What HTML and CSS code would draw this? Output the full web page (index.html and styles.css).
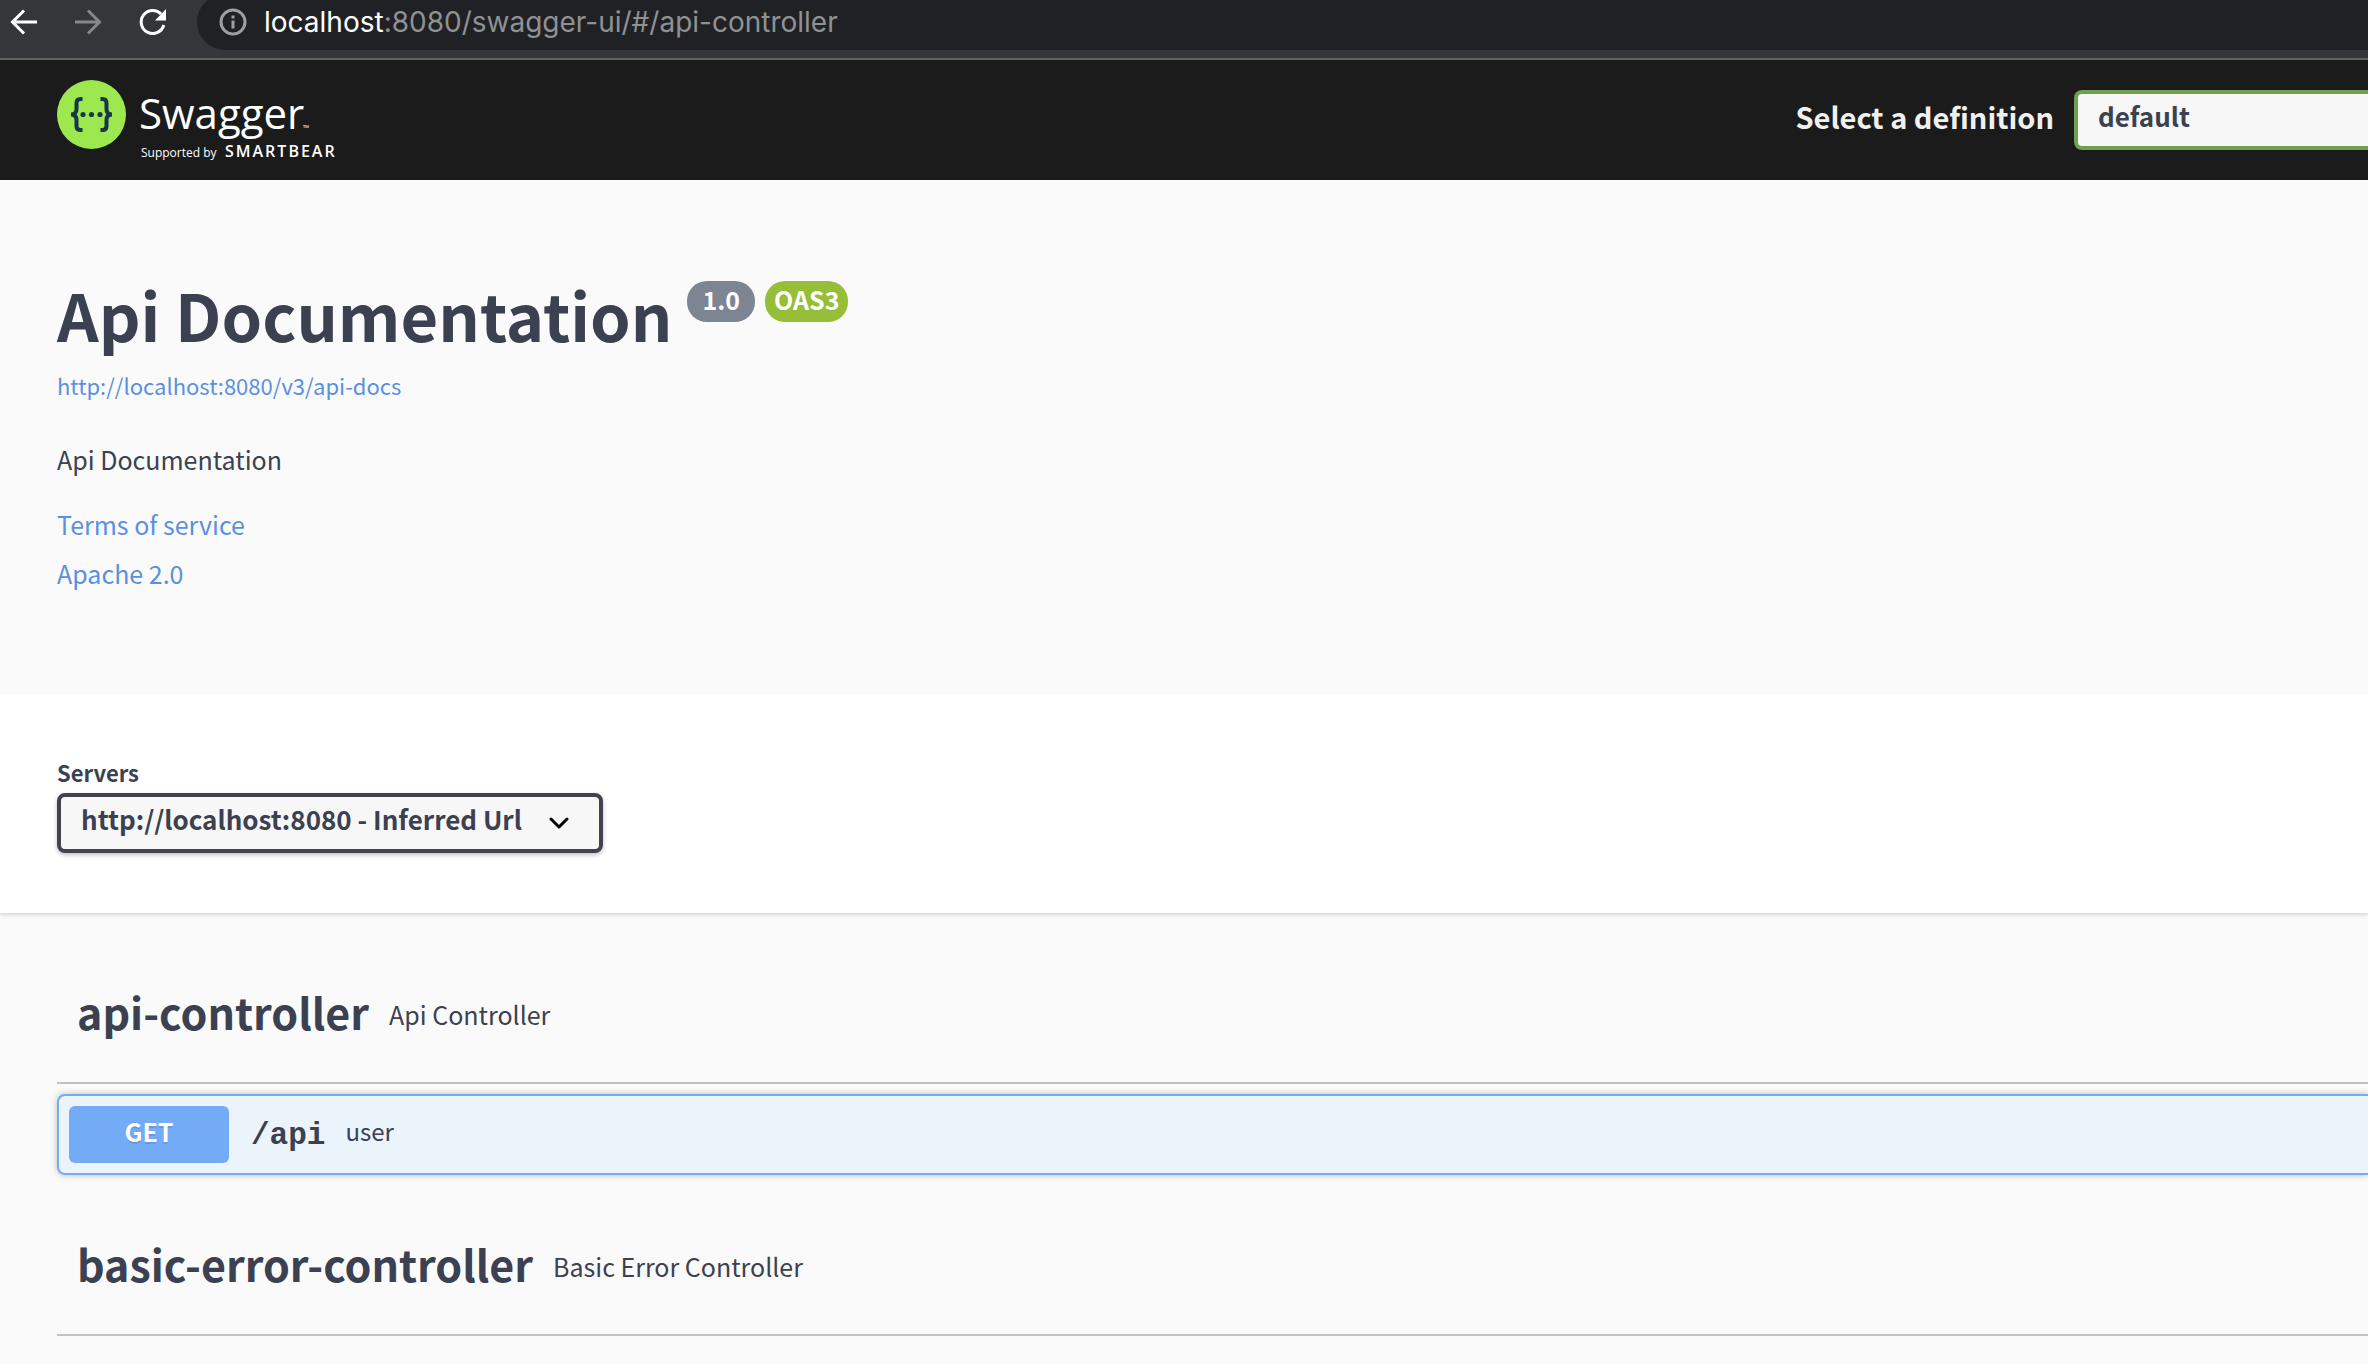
FILE: index.html
```
<!DOCTYPE html>
<html lang="en">
<head>
<meta charset="utf-8">
<title>Swagger UI</title>
<link rel="stylesheet" href="styles.css">
</head>
<body>
<div class="browser-bar">
  <button class="nav-button" aria-label="Back"><svg width="28" height="28" viewBox="0 0 28 28" fill="none" stroke="#fff" stroke-width="3"><path d="M27 14H3M14 2.500L2.500 14L14 25.500"/></svg></button>
  <button class="nav-button" aria-label="Forward"><svg width="28" height="28" viewBox="0 0 28 28" fill="none" stroke="#87888a" stroke-width="3"><path d="M1 14H25M14 2.500L25.500 14L14 25.500"/></svg></button>
  <button class="nav-button" aria-label="Reload"><svg width="28" height="28" viewBox="0 0 28 28" fill="none" stroke="#fff" stroke-width="3"><path d="M25.800 17A11.500 11.500 0 1 1 23 6"/><path d="M28 1V12.500H17Z" fill="#fff" stroke="none"/></svg></button>
  <div class="address">
    <svg width="28" height="28" viewBox="0 0 28 28" fill="none" stroke="#9aa0a6" stroke-width="3"><circle cx="14" cy="14" r="12"/><path d="M14 12.500V20.500M14 7.500V10.500"/></svg>
    <span class="url"><span class="host">localhost</span>:8080/swagger-ui/#/api-controller</span>
  </div>
</div>

<header class="topbar">
  <a class="logo" href="#" aria-label="Swagger">
    <svg width="300" height="120" viewBox="0 0 300 120">
      <circle cx="34.500" cy="54.500" r="34.500" fill="#9de74f"/>
      <g fill="none" stroke="#173647" stroke-width="4">
        <path d="M25.500 39H23.500Q19.500 39 19.500 43V49Q19.500 54.500 14 54.500Q19.500 54.500 19.500 60V66Q19.500 70 23.500 70H25.500"/>
        <path d="M43.500 39H45.500Q49.500 39 49.500 43V49Q49.500 54.500 55 54.500Q49.500 54.500 49.500 60V66Q49.500 70 45.500 70H43.500"/>
      </g>
      <g fill="#173647"><circle cx="26" cy="54.500" r="2.600"/><circle cx="34.500" cy="54.500" r="2.600"/><circle cx="43" cy="54.500" r="2.600"/></g>
      <text class="brand" x="82" y="69">Swagger</text>
      <text class="mark" x="246" y="71">™</text>
      <text class="support" x="84" y="97">Supported by</text>
      <text class="company" x="168" y="97">SMARTBEAR</text>
    </svg>
  </a>
  <form class="definition">
    <label for="definition">Select a definition</label>
    <select id="definition"><option>default</option></select>
  </form>
</header>

<main>
  <section class="info">
    <div class="title-row">
      <h1>Api Documentation</h1>
      <span class="badge">1.0</span>
      <span class="badge badge-oas">OAS3</span>
    </div>
    <a class="docs-link" href="#">http://localhost:8080/v3/api-docs</a>
    <p>Api Documentation</p>
    <a class="terms" href="#">Terms of service</a>
    <a class="license" href="#">Apache 2.0</a>
  </section>

  <section class="schemes">
    <label for="servers">Servers</label>
    <div class="server-select">
      <select id="servers"><option>http://localhost:8080 - Inferred Url</option></select>
      <svg class="chevron" width="20" height="12" viewBox="0 0 20 12" fill="none" stroke="#000" stroke-width="3" stroke-linecap="round" stroke-linejoin="round"><path d="M2 2L10 10L18 2"/></svg>
    </div>
  </section>

  <div class="operations">
    <section class="tag">
      <div class="tag-head"><h2>api-controller</h2><span class="tag-text">Api Controller</span></div>
      <button class="operation">
        <span class="method">GET</span>
        <span class="path">/api</span>
        <span class="summary">user</span>
      </button>
    </section>
    <section class="tag">
      <div class="tag-head"><h2>basic-error-controller</h2><span class="tag-text">Basic Error Controller</span></div>
    </section>
  </div>
</main>
</body>
</html>
```
FILE: styles.css
```
* { box-sizing: border-box; }
body {
  margin: 0;
  background: #fafafa;
  color: #3b4151;
  font: 25px/36px "Noto Sans CJK KR", "Noto Sans", sans-serif;
}
h1, h2, p { margin: 0; }
a { color: #5a90e0; text-decoration: none; }
svg { display: block; flex: none; }
button { border: 0; background: none; padding: 0; color: inherit; font: inherit; }

/* Browser toolbar */
.browser-bar {
  display: flex;
  height: 60px;
  padding-left: 10px;
  background: #35363a;
  border-bottom: 2px solid #5f6063;
  overflow: hidden;
}
.nav-button { width: 64px; height: 44px; display: flex; align-items: center; flex: none; }
.address {
  display: flex;
  flex: 1;
  align-items: center;
  gap: 17px;
  height: 56px;
  margin: -6px 0 0 -5px;
  padding-left: 22px;
  border-radius: 28px 0 0 28px;
  background: #202124;
}
.url { font: 28px/40px Inter, sans-serif; color: #909193; white-space: nowrap; }
.host { color: #fff; }

/* Top bar */
.topbar {
  display: flex;
  align-items: center;
  justify-content: space-between;
  height: 120px;
  padding-left: 57px;
  background: #1b1b1b;
}
.logo text { fill: #fff; font-family: "Open Sans", sans-serif; }
.logo .brand { font-size: 42px; }
.logo .mark { font-size: 8px; }
.logo .support { font-size: 12px; }
.logo .company { font-size: 16px; font-weight: 600; letter-spacing: 2px; }
.definition { display: flex; align-items: center; gap: 20px; }
.definition label { padding-bottom: 8px; color: #f0f0f0; font-size: 29px; font-weight: 700; white-space: nowrap; }

select {
  appearance: none;
  height: 60px;
  padding: 0 20px 8px 20px;
  border: 4px solid #41444e;
  border-radius: 8px;
  background: #f7f7f7;
  color: #3b4151;
  font: 700 26px/36px "Noto Sans CJK KR", "Noto Sans", sans-serif;
}
.definition select {
  width: 294px;
  border-color: #73a050;
  border-right: 0;
  border-radius: 8px 0 0 8px;
}

/* Info */
.info {
  display: flex;
  flex-direction: column;
  align-items: flex-start;
  padding: 94px 57px 103px;
}
.title-row { display: flex; align-items: flex-start; gap: 10px; }
h1 { margin-right: 5px; font-size: 65px; line-height: 80px; }
.badge {
  height: 41px;
  margin-top: 7px;
  padding: 0 15px;
  border-radius: 20px;
  background: #7d8492;
  color: #fff;
  font-weight: 700;
}
.badge-oas { padding: 0 9px; background: #97be38; }
.docs-link { margin-top: 15px; font-size: 22px; line-height: 32px; }
.info p { margin-top: 40px; }
.terms { margin-top: 29px; }
.license { margin-top: 13px; }

/* Servers */
.schemes {
  padding: 62px 57px 60px;
  background: #fff;
  box-shadow: 0 2px 4px rgba(0, 0, 0, .15);
}
.schemes label { display: block; margin-bottom: 5px; font-size: 22px; font-weight: 700; line-height: 32px; }
.server-select { position: relative; width: 546px; }
.server-select select { width: 100%; box-shadow: 0 2px 4px rgba(0, 0, 0, .25); }
.chevron { position: absolute; right: 34px; top: 24px; pointer-events: none; }

/* Operations */
.operations { display: flex; flex-direction: column; gap: 56px; padding: 66px 0 24px 57px; }
.tag { display: flex; flex-direction: column; gap: 10px; }
.tag-head {
  display: flex;
  align-items: center;
  gap: 20px;
  padding: 0 20px 39px;
  border-bottom: 2px solid #c1c1c8;
}
h2 { font-size: 43px; line-height: 64px; }
.tag-text { padding-top: 6px; }
.operation {
  display: flex;
  align-items: center;
  height: 81px;
  padding-left: 10px;
  border: 2px solid #73abf7;
  border-right: 0;
  border-radius: 8px 0 0 8px;
  background: #ebf3fb;
  box-shadow: 0 0 6px rgba(0, 0, 0, .25);
}
.method {
  width: 160px;
  height: 57px;
  padding-top: 7px;
  border-radius: 6px;
  background: #73abf7;
  color: #fff;
  font-weight: 700;
  text-align: center;
  text-shadow: 0 2px 0 rgba(0, 0, 0, .1);
}
.path { margin-left: 22px; padding-top: 2px; font: 700 31px/40px "Liberation Mono", monospace; }
.summary { margin-left: 20px; padding-bottom: 8px; font-size: 24px; }
```
